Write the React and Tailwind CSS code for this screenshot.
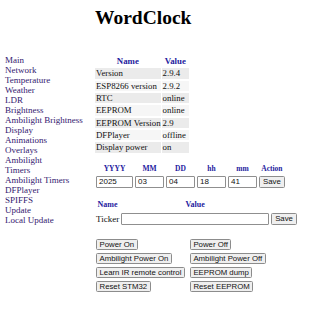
import React from "react";

const nav = [
  "Main", "Network", "Temperature", "Weather", "LDR", "Brightness",
  "Ambilight Brightness", "Display", "Animations", "Overlays", "Ambilight",
  "Timers", "Ambilight Timers", "DFPlayer", "SPIFFS", "Update", "Local Update",
];

const info = [
  ["Version", "2.9.4"],
  ["ESP8266 version", "2.9.2"],
  ["RTC", "online"],
  ["EEPROM", "online"],
  ["EEPROM Version", "2.9"],
  ["DFPlayer", "offline"],
  ["Display power", "on"],
];

const buttons = [
  ["Power On", "Power Off"],
  ["Ambilight Power On", "Ambilight Power Off"],
  ["Learn IR remote control", "EEPROM dump"],
  ["Reset STM32", "Reset EEPROM"],
];

function Btn({ children, className = "" }) {
  return (
    <button className={"h-[11px] px-[2.5px] border border-[#8c8c8c] bg-[#efefef] rounded-[1.5px] font-['Liberation_Sans',Arial,sans-serif] text-[7.8px] leading-[9px] text-[#111] whitespace-nowrap " + className}>
      {children}
    </button>
  );
}

function Inp({ value, className = "" }) {
  return (
    <div className={"h-[12px] border border-[#8f8f8f] rounded-[1px] bg-white pl-[2px] font-['Liberation_Sans',Arial,sans-serif] text-[8px] leading-[10px] text-[#111] " + className}>
      {value}
    </div>
  );
}

export default function App() {
  return (
    <div className="w-[326px] h-[320px] bg-white flex items-start font-['Liberation_Serif','Times_New_Roman',serif] text-[#111]">
      <nav className="w-[95px] shrink-0 pl-[5px] mt-[55px] flex flex-col">
        {nav.map((n) => (
          <span key={n} className="text-[9px] leading-[10px] text-[#34206f] whitespace-nowrap">{n}</span>
        ))}
      </nav>
      <div className="flex flex-col">
        <h1 className="mt-[8px] text-[19.5px] leading-[20px] font-bold text-black">WordClock</h1>

        <div className="mt-[28px] grid grid-cols-[auto_auto] w-max gap-x-[1px] gap-y-[2px] text-[8.8px] leading-[10.33px]">
          <div className="text-center font-bold text-[#1f22a0]">Name</div>
          <div className="text-center font-bold text-[#1f22a0]">Value</div>
          {info.map(([k, v], i) => (
            <React.Fragment key={k}>
              <div className={"pl-[1px] whitespace-nowrap " + (i % 2 === 0 ? "bg-[#ebebeb]" : "bg-[#f6f6f6]")}>{k}</div>
              <div className={"pl-[1px] pr-[3px] whitespace-nowrap " + (i % 2 === 0 ? "bg-[#ebebeb]" : "bg-[#f6f6f6]")}>{v}</div>
            </React.Fragment>
          ))}
        </div>

        <div className="mt-[11px] ml-[1px] grid grid-cols-[37px_29px_29px_29px_29px_auto] gap-x-[2px] gap-y-[2px] w-max">
          {["YYYY", "MM", "DD", "hh", "mm", "Action"].map((h) => (
            <div key={h} className="text-center font-bold text-[7.5px] leading-[10px] text-[#1f22a0]">{h}</div>
          ))}
          <Inp value="2025" />
          <Inp value="03" />
          <Inp value="04" />
          <Inp value="18" />
          <Inp value="41" />
          <Btn className="h-[12px] px-[3px]">Save</Btn>
        </div>

        <div className="mt-[12px] ml-[1px] grid grid-cols-[auto_148px_auto] gap-x-[2px] gap-y-[3px] w-max items-center">
          <div className="text-center font-bold text-[8px] leading-[10px] text-[#1f22a0]">Name</div>
          <div className="text-center font-bold text-[8px] leading-[10px] text-[#1f22a0]">Value</div>
          <div></div>
          <div className="text-[9px] leading-[12px]">Ticker</div>
          <Inp value="" />
          <Btn className="h-[12px] px-[3px]">Save</Btn>
        </div>

        <div className="mt-[14px] ml-[1px] grid grid-cols-[auto_auto] gap-x-[5px] gap-y-[3px] w-max justify-items-start">
          {buttons.map(([a, b]) => (
            <React.Fragment key={a}>
              <Btn>{a}</Btn>
              <Btn>{b}</Btn>
            </React.Fragment>
          ))}
        </div>
      </div>
    </div>
  );
}
